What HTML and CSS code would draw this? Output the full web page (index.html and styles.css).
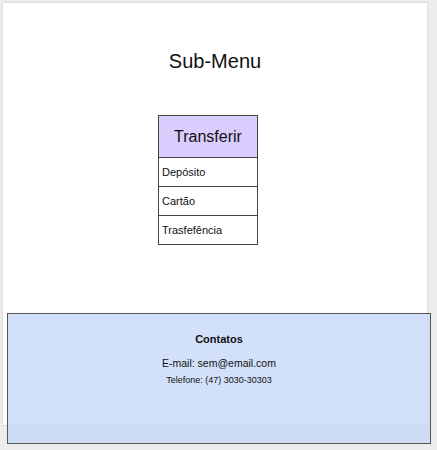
FILE: index.html
```html
<!DOCTYPE html>
<html lang="pt">
<head>
<meta charset="utf-8">
<title>Sub-Menu</title>
<link rel="stylesheet" href="styles.css">
</head>
<body>
<div class="page">
  <h1 class="title">Sub-Menu</h1>
  <nav class="menu">
    <div class="menu-head">Transferir</div>
    <div class="menu-item">Depósito</div>
    <div class="menu-item">Cartão</div>
    <div class="menu-item">Trasfefência</div>
  </nav>
</div>
<footer class="footer">
  <div class="footer-title">Contatos</div>
  <div class="footer-mail">E-mail: sem@email.com</div>
  <div class="footer-phone">Telefone: (47) 3030-30303</div>
</footer>
</body>
</html>
```
FILE: styles.css
```css
html, body {
  margin: 0;
  padding: 0;
}
body {
  background: #ececec;
  font-family: "Liberation Sans", Arial, sans-serif;
  color: #111;
  padding: 3px 3px 6px;
}
.page {
  width: 424px;
  height: 422px;
  background: #fff;
  box-shadow: 0 0 2px rgba(0, 0, 0, 0.18);
  padding-top: 46px;
  box-sizing: border-box;
}
.title {
  margin: 0;
  font-size: 20px;
  line-height: 24px;
  font-weight: normal;
  text-align: center;
}
.menu {
  margin: 42px 0 0 155px;
  width: 100px;
  border: 1px solid #444;
  box-sizing: border-box;
}
.menu-head {
  height: 41px;
  background: #d9cdfd;
  font-size: 16px;
  display: flex;
  align-items: center;
  justify-content: center;
}
.menu-item {
  height: 28px;
  border-top: 1px solid #444;
  font-size: 11px;
  padding-left: 3px;
  display: flex;
  align-items: center;
}
.footer {
  margin: -112px 0 0 4px;
  width: 424px;
  height: 131px;
  box-sizing: border-box;
  border: 1px solid #555;
  background: rgba(199, 217, 247, 0.8);
  padding-top: 18px;
  text-align: center;
  position: relative;
}
.footer-title {
  font-size: 11px;
  line-height: 14px;
  font-weight: bold;
}
.footer-mail {
  margin-top: 10px;
  font-size: 10.5px;
  line-height: 14px;
}
.footer-phone {
  margin-top: 4px;
  font-size: 9px;
  line-height: 12px;
}
```
